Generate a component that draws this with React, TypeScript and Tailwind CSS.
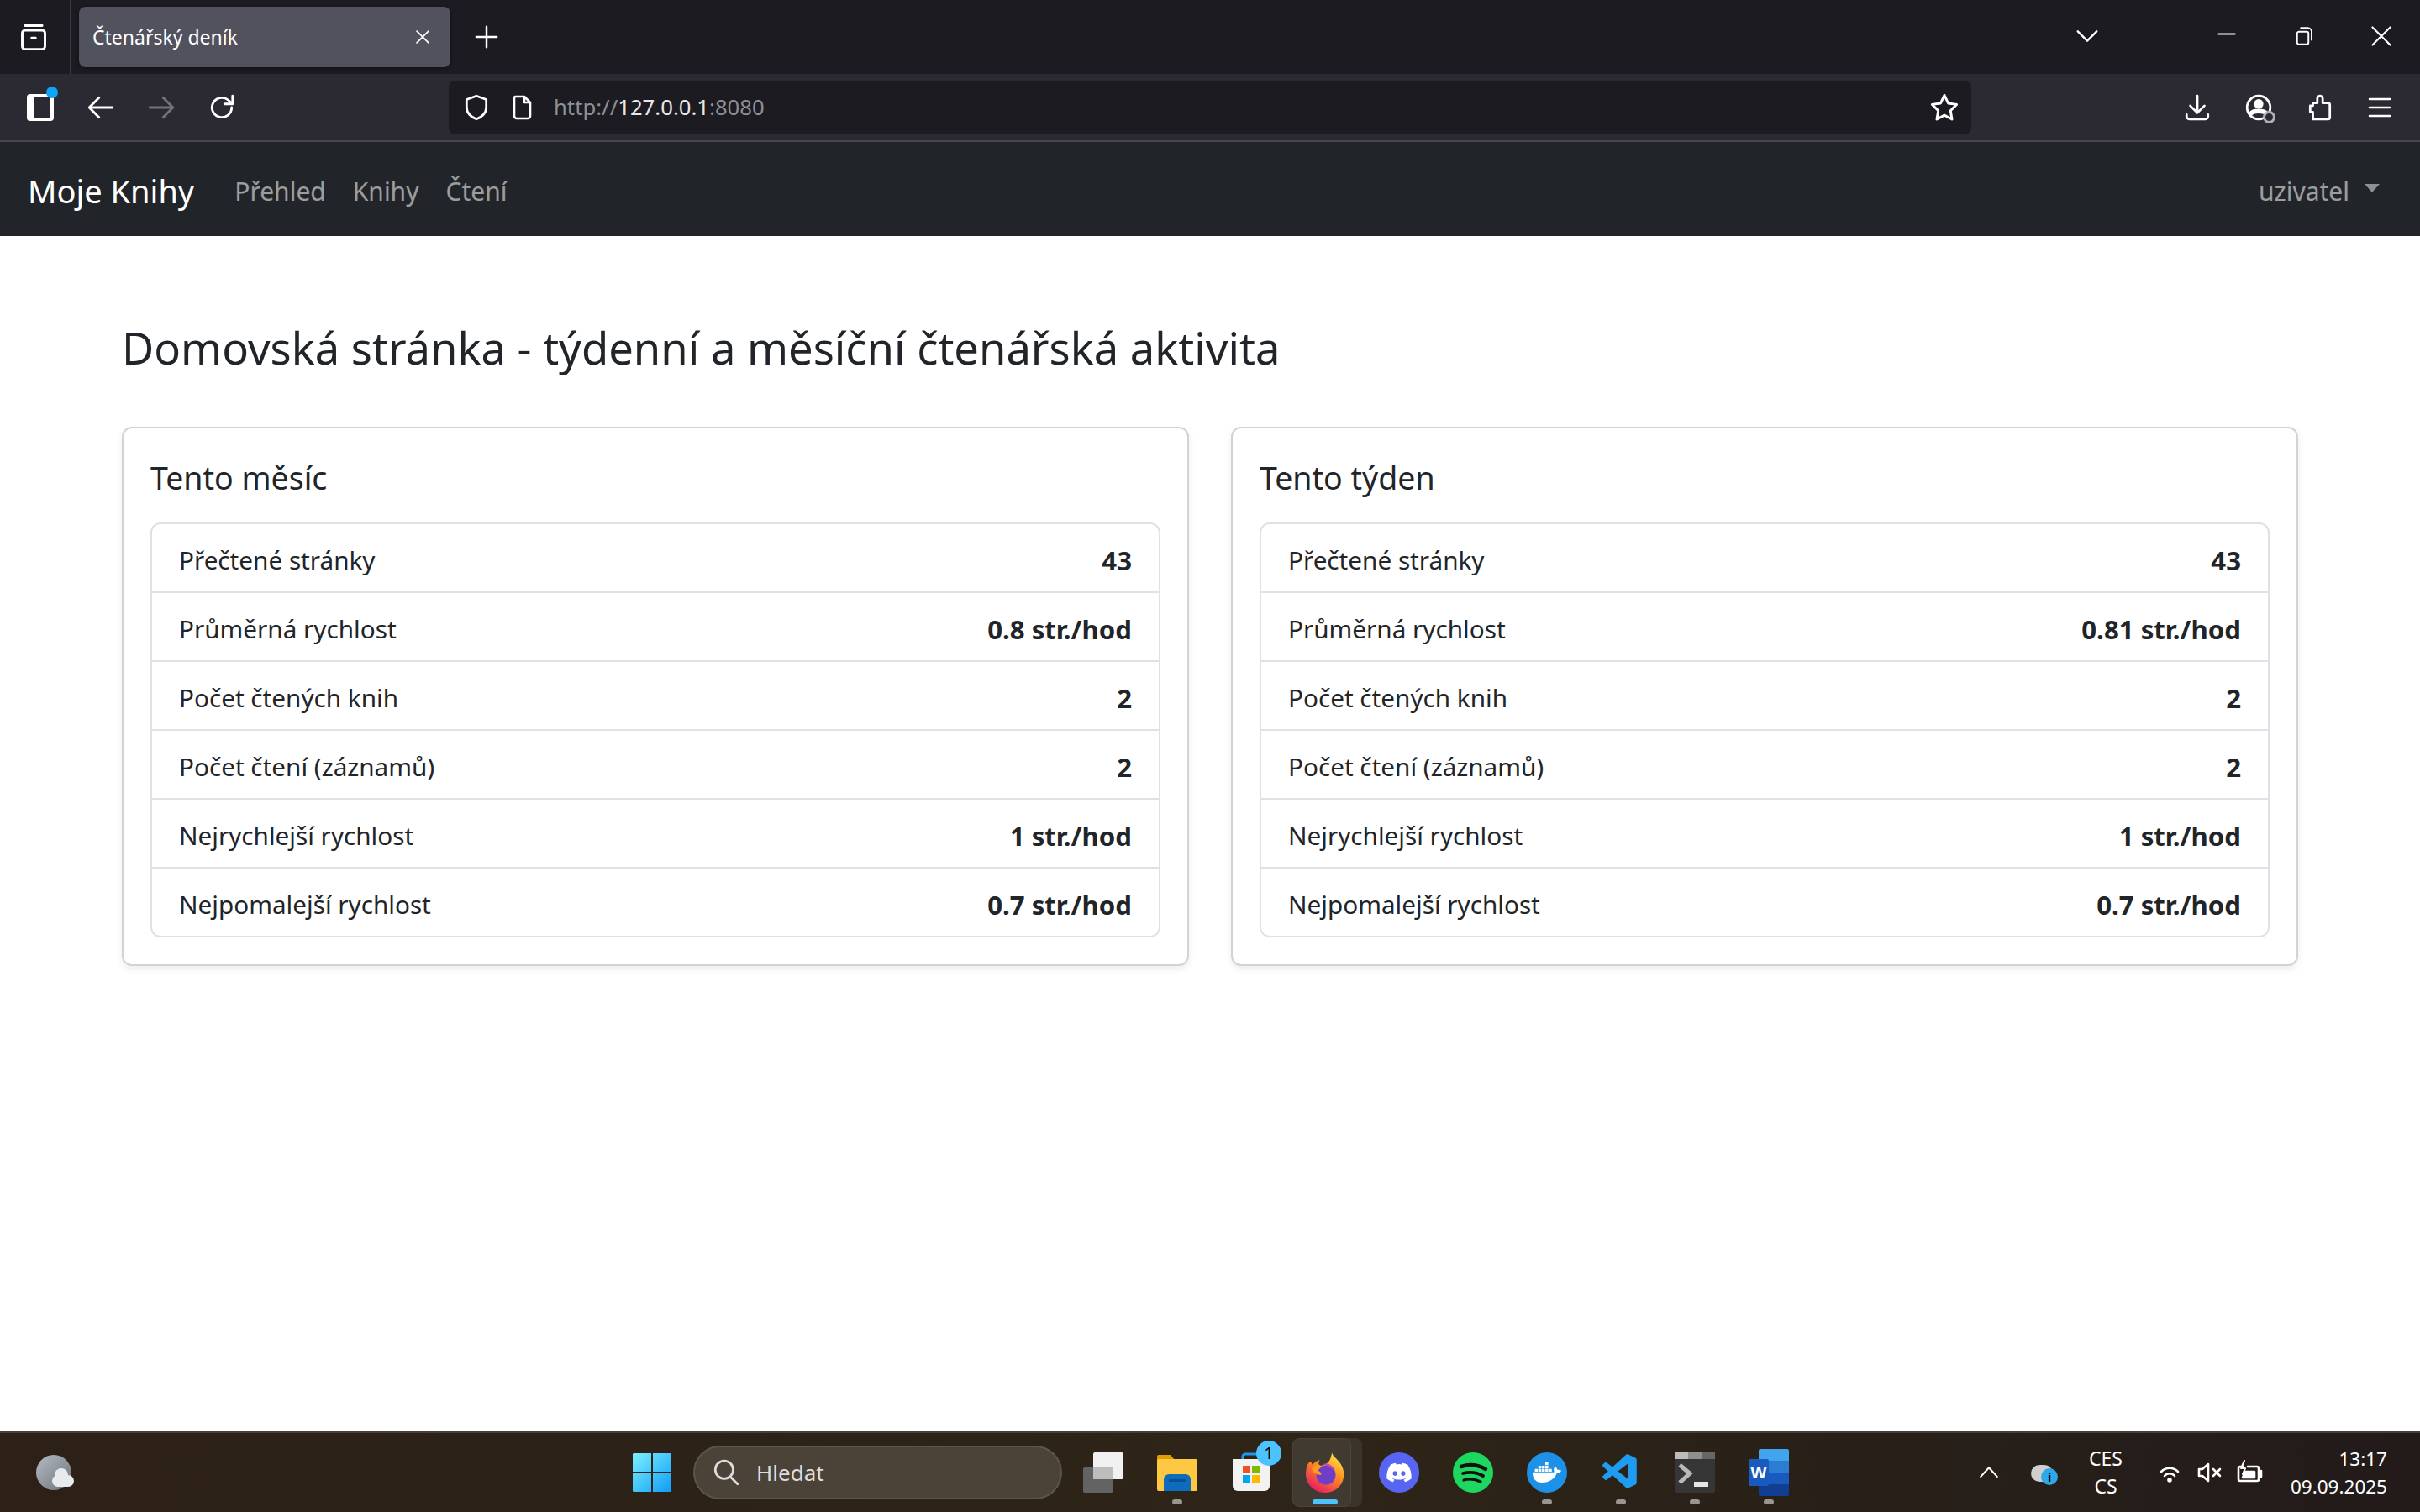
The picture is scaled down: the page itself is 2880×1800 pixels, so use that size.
import { FaDiscord, FaDocker } from "react-icons/fa";
import { VscVscode } from "react-icons/vsc";
import type { ReactNode } from "react";

const monthStats = [
  ["Přečtené stránky", "43"],
  ["Průměrná rychlost", "0.8 str./hod"],
  ["Počet čtených knih", "2"],
  ["Počet čtení (záznamů)", "2"],
  ["Nejrychlejší rychlost", "1 str./hod"],
  ["Nejpomalejší rychlost", "0.7 str./hod"],
];

const weekStats = monthStats.map((row, i) => (i === 1 ? [row[0], "0.81 str./hod"] : row));

function Stroke({ size = 32, className = "", children }: { size?: number; className?: string; children: ReactNode }) {
  return (
    <svg width={size} height={size} viewBox="0 0 32 32" fill="none" stroke="currentColor" strokeWidth="2.6" strokeLinecap="round" strokeLinejoin="round" className={className}>
      {children}
    </svg>
  );
}

function StatsCard({ title, rows }: { title: string; rows: string[][] }) {
  return (
    <section className="rounded-[12px] border-2 border-[#d2d3d4] bg-white p-[32px] shadow-[0_4px_8px_rgba(0,0,0,0.075)]">
      <h5 className="mb-[29px] pt-[3px] text-[37.5px] leading-[48px] text-[#212529]">{title}</h5>
      <ul className="divide-y-2 divide-[#dee2e6] rounded-[12px] border-2 border-[#dee2e6]">
        {rows.map(([label, value]) => (
          <li key={label} className="flex items-center justify-between px-[32px] pb-[13px] pt-[19px] text-[29.7px] leading-[48px] text-[#212529]">
            <span>{label}</span>
            <strong className="text-[31.2px] font-bold">{value}</strong>
          </li>
        ))}
      </ul>
    </section>
  );
}

function TabStrip() {
  return (
    <div className="flex h-[88px] bg-[#1c1b22] text-white">
      <div className="flex w-[85px] items-center justify-center border-r-2 border-[#3a3940] pr-[4px]">
        <Stroke size={36}>
          <rect x="4" y="9" width="24" height="20" rx="3" />
          <path d="M7 4h18M14 17h4" />
        </Stroke>
      </div>
      <div className="ml-[9px] mt-[8px] flex h-[72px] w-[442px] items-center justify-between rounded-[8px] bg-[#52525e] pl-[16px] pr-[22px] shadow-[0_1px_4px_rgba(0,0,0,0.5)]">
        <span className="text-[23px]">Čtenářský deník</span>
        <Stroke size={22}>
          <path d="M6 6l20 20M26 6L6 26" />
        </Stroke>
      </div>
      <div className="ml-[28px] flex items-center">
        <Stroke size={30}>
          <path d="M16 3v26M3 16h26" />
        </Stroke>
      </div>
      <div className="ml-auto flex items-center">
        <Stroke size={30} className="mb-[2px] mr-[139px]">
          <path d="M4 10l12 12 12-12" />
        </Stroke>
        <Stroke size={24} className="mb-[4px] mr-[68px]">
          <path d="M3 14h26" />
        </Stroke>
        <Stroke size={24} className="mb-[2px] mr-[67px]">
          <rect x="5" y="9" width="18" height="20" rx="3" />
          <path d="M11 3h11a6 6 0 0 1 6 6v13" />
        </Stroke>
        <Stroke size={26} className="mb-[2px] mr-[33px]">
          <path d="M3 3l26 26M29 3L3 29" />
        </Stroke>
      </div>
    </div>
  );
}

function Toolbar() {
  return (
    <div className="flex h-[81px] items-center border-b-2 border-[#47474d] bg-[#2b2a33] text-white">
      <div className="relative ml-[32px] h-[32px] w-[32px] rounded-[4px] border-[4px] border-l-[8px] border-white">
        <span className="absolute -right-[9px] -top-[13px] h-[14px] w-[14px] rounded-full bg-[#0ea5f5]" />
      </div>
      <Stroke size={34} className="ml-[39px]">
        <path d="M29 16H4M14 5L3 16l11 11" />
      </Stroke>
      <Stroke size={34} className="ml-[38px] text-[#74737a]">
        <path d="M3 16h25M18 5l11 11-11 11" />
      </Stroke>
      <Stroke size={34} className="ml-[38px]">
        <path d="M27 16a11 11 0 1 1-4-8.500L28 12M28 3v9h-9" />
      </Stroke>
      <div className="ml-[253px] flex h-[64px] w-[1812px] items-center rounded-[8px] bg-[#1c1b22] pl-[16px] pr-[14px]">
        <Stroke size={34}>
          <path d="M16 3l11 4v9c0 6-5 11-11 13C10 27 5 22 5 16V7z" />
        </Stroke>
        <Stroke size={32} className="ml-[22px]">
          <path d="M7 3h11l7 7v16a3 3 0 0 1-3 3H9a3 3 0 0 1-3-3V4zM18 3v7h7" />
        </Stroke>
        <span className="ml-[21px] mt-[2px] text-[25.7px] text-[#8f8f94]">
          http://<span className="text-[#e8e8ea]">127.0.0.1</span>:8080
        </span>
        <Stroke size={36} className="ml-auto">
          <path d="M16 3l4 8.500 9 1.300-6.500 6.500 1.500 9.200-8-4.400-8 4.400 1.500-9.200L3 12.800l9-1.300z" />
        </Stroke>
      </div>
      <Stroke size={34} className="ml-[252px]">
        <path d="M16 3v19M8 14l8 8 8-8M4 24v2a3 3 0 0 0 3 3h18a3 3 0 0 0 3-3v-2" />
      </Stroke>
      <div className="relative ml-[39px] h-[34px] w-[34px]">
        <Stroke size={34}>
          <circle cx="16" cy="16" r="13" />
          <circle cx="16" cy="12" r="4" fill="currentColor" />
          <path d="M7 23c3-4 15-4 18 0" strokeWidth="5" />
        </Stroke>
        <span className="absolute -bottom-[2px] -right-[3px] h-[15px] w-[15px] rounded-full border-[3px] border-[#b0b0b4] bg-[#2b2a33]" />
      </div>
      <Stroke size={34} className="ml-[39px]">
        <path d="M8 29V21H5v-7h3v-3h5V6a3 3 0 0 1 6 0v5h6a2 2 0 0 1 2 2v14a2 2 0 0 1-2 2z" />
      </Stroke>
      <Stroke size={32} className="ml-[38px]">
        <path d="M4 6h24M4 16h24M4 26h24" />
      </Stroke>
    </div>
  );
}

function Navbar() {
  return (
    <nav className="flex h-[112px] items-center bg-[#212529] pl-[33px] pr-[48px] pt-[4px] text-[30px] text-white/55">
      <span className="mr-[48px] text-[38px] text-white">Moje Knihy</span>
      <a className="mr-[32px]">Přehled</a>
      <a className="mr-[32px]">Knihy</a>
      <a>Čtení</a>
      <span className="ml-auto flex items-center">
        uzivatel
        <span className="mb-[6px] ml-[18px] h-0 w-0 border-x-[9px] border-t-[10px] border-x-transparent border-t-[#8f9294]" />
      </span>
    </nav>
  );
}

function WindowsLogo() {
  return (
    <svg width="46" height="46" viewBox="0 0 46 46">
      <defs>
        <linearGradient id="win" x1="0" y1="0" x2="1" y2="1">
          <stop offset="0" stopColor="#7df0ff" />
          <stop offset="1" stopColor="#0f9cf5" />
        </linearGradient>
      </defs>
      <path d="M1 0h21v22H0V1zM24 0h21l1 1v21H24zM0 24h22v22H1l-1-1zM24 24h22v21l-1 1H24z" fill="url(#win)" />
    </svg>
  );
}

function TaskView() {
  return (
    <svg width="48" height="48" viewBox="0 0 48 48">
      <rect x="0" y="18" width="36" height="30" rx="2" fill="#636363" />
      <rect x="12" y="0" width="36" height="32" rx="2" fill="#f1f1f1" />
      <rect x="12" y="18" width="24" height="14" fill="#bdbdbd" />
    </svg>
  );
}

function Explorer() {
  return (
    <svg width="48" height="44" viewBox="0 0 48 44">
      <path d="M0 3a2 2 0 0 1 2-2h14l4 5h26a2 2 0 0 1 2 2v6H0z" fill="#e0a000" />
      <rect x="0" y="6" width="48" height="38" rx="2" fill="#fdc943" />
      <path d="M8 44V30a6 6 0 0 1 6-6h20a6 6 0 0 1 6 6v14z" fill="#0f6cbd" />
      <rect x="14" y="30" width="20" height="3" fill="#0a4f8f" />
    </svg>
  );
}

function Store() {
  return (
    <div className="relative">
      <svg width="44" height="48" viewBox="0 0 44 48">
        <path d="M12 8V5a3 3 0 0 1 3-3h14a3 3 0 0 1 3 3v3" fill="none" stroke="#1d9bf0" strokeWidth="3" />
        <path d="M0 8h44v32a6 6 0 0 1-6 6H6a6 6 0 0 1-6-6z" fill="#f2f2f2" />
        <rect x="12" y="16" width="9" height="9" fill="#f25022" />
        <rect x="23" y="16" width="9" height="9" fill="#7fba00" />
        <rect x="12" y="27" width="9" height="9" fill="#00a4ef" />
        <rect x="23" y="27" width="9" height="9" fill="#ffb900" />
      </svg>
      <span className="absolute -right-[14px] -top-[14px] flex h-[30px] w-[30px] items-center justify-center rounded-full bg-[#4cc2ff] text-[20px] text-black">1</span>
    </div>
  );
}

function FirefoxLogo() {
  return (
    <svg width="46" height="48" viewBox="0 0 46 48">
      <defs>
        <linearGradient id="fx" x1="0.8" y1="0" x2="0.2" y2="1">
          <stop offset="0" stopColor="#ffe847" />
          <stop offset="0.45" stopColor="#ff8a1f" />
          <stop offset="1" stopColor="#e3116c" />
        </linearGradient>
      </defs>
      <path d="M31 0c1 5 6 7 10 13 4 6 5 12 4 17-2 11-11 18-22 18C10 48 0 38 0 26c0-5 1-9 3-13l3-2 2 4c2-3 5-5 9-6-3 3-2 6 1 7 5-1 9-3 11-8 1-3 2-5 2-8z" fill="url(#fx)" />
      <circle cx="24" cy="27" r="11.500" fill="#6f3ec9" />
      <path d="M7 19c3-4 9-5 13-2-3 1-5 3-5 5 3 1 4 3 3 5-5 0-10-3-11-8z" fill="#ff9a1f" />
      <path d="M20 14c6-2 13 1 15 9-3-4-8-6-15-9z" fill="#c643b5" />
    </svg>
  );
}

function Spotify() {
  return (
    <svg width="48" height="48" viewBox="0 0 48 48">
      <circle cx="24" cy="24" r="24" fill="#1ed760" />
      <g fill="none" stroke="#121212" strokeLinecap="round">
        <path d="M10 17c9-3 20-2 29 3" strokeWidth="4.500" />
        <path d="M12 25c8-2 17-1 24 3" strokeWidth="3.800" />
        <path d="M13 33c7-2 14-1 20 2" strokeWidth="3.200" />
      </g>
    </svg>
  );
}

function Terminal() {
  return (
    <svg width="48" height="48" viewBox="0 0 48 48">
      <rect width="48" height="48" rx="2" fill="#363636" />
      <rect width="16" height="8" fill="#bcbcbc" />
      <rect x="16" width="16" height="8" fill="#8f8f8f" />
      <rect x="32" width="16" height="8" fill="#676767" />
      <path d="M6 15l12 10-12 11" fill="none" stroke="#b9b9b9" strokeWidth="5" />
      <rect x="23" y="35" width="17" height="6" fill="#e6e6e6" />
    </svg>
  );
}

function Word() {
  return (
    <div className="relative h-[56px] w-[48px]">
      <svg width="36" height="56" viewBox="0 0 36 56" className="absolute right-0 top-0">
        <path d="M2 0h32a2 2 0 0 1 2 2v12H0V2a2 2 0 0 1 2-2z" fill="#41a5ee" />
        <rect y="14" width="36" height="14" fill="#2b7cd3" />
        <rect y="28" width="36" height="14" fill="#185abd" />
        <path d="M0 42h36v12a2 2 0 0 1-2 2H2a2 2 0 0 1-2-2z" fill="#103f91" />
      </svg>
      <span className="absolute left-0 top-[12px] flex h-[32px] w-[24px] items-center justify-center rounded-[2px] bg-[#185abd] text-[20px] font-bold text-white">W</span>
    </div>
  );
}

function TaskSlot({ running, active, children }: { running?: boolean; active?: boolean; children: ReactNode }) {
  return (
    <div className="relative flex h-[94px] w-[88px] items-center justify-center">
      {active && (
        <>
          <span className="absolute bottom-[6px] left-[9px] top-[6px] w-[79px] rounded-[8px] bg-[#3a342b]" />
          <span className="absolute bottom-[6px] left-[5px] top-[6px] w-[70px] rounded-[8px] border border-[#4a443a] bg-[#403a31]" />
        </>
      )}
      <span className="relative">{children}</span>
      {running && (
        <span className={active ? "absolute bottom-[9px] h-[6px] w-[30px] rounded-full bg-[#4cc2ff]" : "absolute bottom-[9px] h-[6px] w-[12px] rounded-full bg-[#9a9590]"} />
      )}
    </div>
  );
}

function Taskbar() {
  return (
    <footer className="flex h-[96px] items-center border-t-2 border-[#45403a] bg-[linear-gradient(90deg,#2c2017,#2e2417_55%,#221b1a)] text-white">
      {/* weather */}
      <div className="relative ml-[43px] h-[42px] w-[42px] rounded-full bg-[linear-gradient(135deg,#b4bcc4,#6d7278)]">
        <span className="absolute -right-[3px] bottom-[4px] h-[14px] w-[26px] rounded-full bg-[#e8ebee]" />
        <span className="absolute bottom-[10px] right-[4px] h-[16px] w-[16px] rounded-full bg-[#e8ebee]" />
      </div>
      <div className="ml-[668px] flex items-center">
        <WindowsLogo />
        <div className="ml-[26px] mr-[5px] flex h-[64px] w-[439px] items-center rounded-full border-2 border-[#5c5549] bg-[#4b4338] pl-[20px] text-[26px] text-[#dcdcdc]">
          <Stroke size={34}>
            <circle cx="14" cy="13" r="10" />
            <path d="M21 21l8 8" />
          </Stroke>
          <span className="ml-[19px]">Hledat</span>
        </div>
        <TaskSlot><TaskView /></TaskSlot>
        <TaskSlot running><Explorer /></TaskSlot>
        <TaskSlot><Store /></TaskSlot>
        <TaskSlot running active><FirefoxLogo /></TaskSlot>
        <TaskSlot>
          <span className="flex h-[48px] w-[48px] items-center justify-center rounded-full bg-[#5865f2]"><FaDiscord size={32} /></span>
        </TaskSlot>
        <TaskSlot><Spotify /></TaskSlot>
        <TaskSlot running>
          <span className="flex h-[48px] w-[48px] items-center justify-center rounded-full bg-[#1d91e8]"><FaDocker size={34} /></span>
        </TaskSlot>
        <TaskSlot running><VscVscode size={50} className="text-[#1f9cf0]" /></TaskSlot>
        <TaskSlot running><Terminal /></TaskSlot>
        <TaskSlot running><Word /></TaskSlot>
      </div>
      <div className="ml-auto mr-[39px] flex items-center">
        <Stroke size={26} className="mr-[37px]">
          <path d="M4 22L16 9l12 13" />
        </Stroke>
        <div className="relative mr-[37px] h-[30px] w-[32px]">
          <span className="absolute left-0 top-[6px] h-[20px] w-[26px] rounded-full bg-[#cfcfcf]" />
          <span className="absolute bottom-0 right-0 flex h-[20px] w-[20px] items-center justify-center rounded-full bg-[#2ea8e6] text-[14px] font-bold text-black">i</span>
        </div>
        <div className="mr-[40px] flex flex-col items-center text-[23px] leading-[33px]">
          <span>CES</span>
          <span>CS</span>
        </div>
        <Stroke size={32} className="mr-[16px]">
          <path d="M6 15a14 14 0 0 1 20 0M10 20a8 8 0 0 1 12 0" />
          <circle cx="16" cy="25" r="1.500" fill="currentColor" />
        </Stroke>
        <Stroke size={32} className="mr-[15px]">
          <path d="M3 12v8h4l7 6V6l-7 6zM20 12l8 8M28 12l-8 8" />
        </Stroke>
        <Stroke size={32} className="mr-[33px]">
          <path d="M8 9H5a2 2 0 0 0-2 2v13a2 2 0 0 0 2 2h20a2 2 0 0 0 2-2V11a2 2 0 0 0-2-2H14M30 14v7" />
          <path d="M8 22l3-7h11v7z" fill="currentColor" />
          <path d="M10 2L6 11h5l-3 7" strokeWidth="2" />
        </Stroke>
        <div className="flex flex-col items-end text-[22.5px] leading-[33px]">
          <span>13:17</span>
          <span>09.09.2025</span>
        </div>
      </div>
    </footer>
  );
}

export default function App() {
  return (
    <div className="flex h-[1800px] w-[2880px] flex-col overflow-hidden bg-white font-['Noto_Sans',sans-serif]">
      <TabStrip />
      <Toolbar />
      <Navbar />
      <main className="flex-1 px-[145px] pt-[99px]">
        <h3 className="mb-[61px] text-[52.5px] leading-[67px] text-[#212529]">Domovská stránka - týdenní a měsíční čtenářská aktivita</h3>
        <div className="grid grid-cols-2 gap-[50px]">
          <StatsCard title="Tento měsíc" rows={monthStats} />
          <StatsCard title="Tento týden" rows={weekStats} />
        </div>
      </main>
      <Taskbar />
    </div>
  );
}
